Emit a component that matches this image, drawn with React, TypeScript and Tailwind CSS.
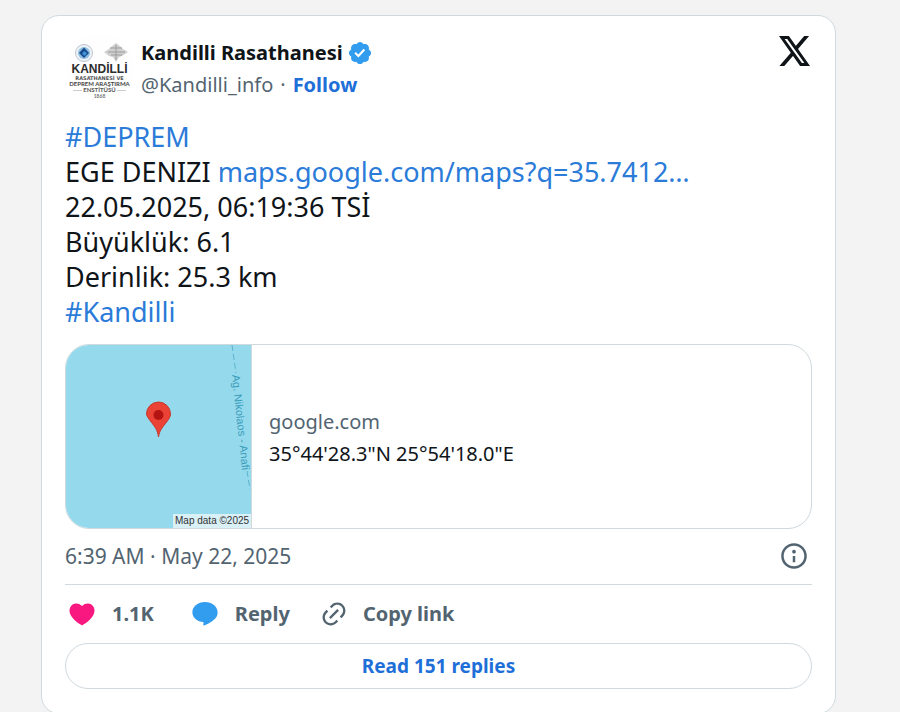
import type { ReactNode } from "react";

const icons = {
  verified:
    "M22.25 12c0-1.43-.88-2.67-2.19-3.34.46-1.39.2-2.9-.81-3.91s-2.52-1.27-3.91-.81c-.66-1.31-1.91-2.19-3.34-2.19s-2.67.88-3.33 2.19c-1.4-.46-2.91-.2-3.92.81s-1.26 2.52-.8 3.91c-1.31.67-2.2 1.91-2.2 3.34s.89 2.67 2.2 3.34c-.46 1.39-.21 2.9.8 3.91s2.52 1.26 3.91.81c.67 1.31 1.91 2.19 3.34 2.19s2.68-.88 3.34-2.19c1.39.45 2.9.2 3.91-.81s1.27-2.52.81-3.91c1.31-.67 2.19-1.91 2.19-3.34zm-11.71 4.2L6.8 12.46l1.41-1.42 2.26 2.26 4.8-5.23 1.47 1.36-6.2 6.77z",
  info: "M13.5 8.5c0 .83-.67 1.5-1.5 1.5s-1.5-.67-1.5-1.5S11.17 7 12 7s1.5.67 1.5 1.5zM13 17v-5h-2v5h2zm-1 5.25c5.66 0 10.25-4.59 10.25-10.25S17.66 1.75 12 1.75 1.75 6.34 1.75 12 6.34 22.25 12 22.25zM20.25 12c0 4.56-3.69 8.25-8.25 8.25S3.75 16.56 3.75 12 7.44 3.75 12 3.75s8.25 3.69 8.25 8.25z",
  heart:
    "M20.884 13.19c-1.351 2.48-4.001 5.12-8.379 7.67l-.503.3-.504-.3c-4.379-2.55-7.029-5.19-8.382-7.67-1.36-2.5-1.41-4.86-.514-6.67.887-1.79 2.647-2.91 4.601-3.01 1.651-.09 3.368.56 4.798 2.01 1.429-1.45 3.146-2.1 4.796-2.01 1.954.1 3.714 1.22 4.601 3.01.896 1.81.846 4.17-.514 6.67z",
  reply:
    "M12 2.4c5.7 0 10.1 3.6 10.1 8.4 0 3.2-1.900 5.300-4.700 7.100-1.900 1.200-4 2.300-6 3.300-.5.200-.9-.1-.8-.6l.3-2.100C5.700 18.200 1.900 15 1.900 10.600 1.900 5.900 6.300 2.400 12 2.400z",
  link: "M18.36 5.64c-1.95-1.96-5.11-1.96-7.07 0L9.88 7.05 8.46 5.64l1.42-1.42c2.73-2.73 7.16-2.73 9.9 0 2.73 2.74 2.73 7.17 0 9.9l-1.42 1.42-1.41-1.42 1.41-1.41c1.96-1.96 1.96-5.12 0-7.07zm-2.12 3.53l-7.07 7.07-1.41-1.41 7.07-7.07 1.41 1.41zm-12.02.71l1.42-1.42 1.41 1.42-1.41 1.41c-1.96 1.96-1.96 5.12 0 7.07 1.95 1.96 5.11 1.96 7.07 0l1.41-1.41 1.42 1.41-1.42 1.42c-2.73 2.73-7.16 2.73-9.9 0-2.73-2.74-2.73-7.17 0-9.9z",
};

function Icon({ name, className }: { name: keyof typeof icons; className: string }) {
  return (
    <svg viewBox="0 0 24 24" fill="currentColor" aria-hidden="true" className={className}>
      <path d={icons[name]} />
    </svg>
  );
}

function XLogo() {
  return (
    <svg viewBox="0 0 31 30" fill="currentColor" aria-hidden="true" className="h-[30px] w-[31px]">
      <path fillRule="evenodd" d="M0 0h9.900L31 30h-9.900zM5.600 2.900L22.900 27.100h2.500L8.200 2.900z" />
      <path d="M25.200 0h4.900L18.600 13.600l-2.300-3.200zM.4 30h4.900l9.900-11.400-2.300-3.200z" />
    </svg>
  );
}

function TextLink({ children }: { children: ReactNode }) {
  return (
    <a href="#" className="text-[#2b7bd9] hover:underline">
      {children}
    </a>
  );
}

function Avatar() {
  return (
    <svg viewBox="0 0 70 70" className="size-[70px] shrink-0" role="img" aria-label="Kandilli Rasathanesi">
      <circle cx="35" cy="35" r="34" fill="#fefefe" />
      <circle cx="19" cy="20" r="8.5" fill="#eef2f6" stroke="#bcc6d2" strokeWidth="1" />
      <circle cx="19" cy="20" r="6" fill="#8fbfe2" />
      <path d="M19 14.500l5 5.500-5 5-5-5z" fill="#174b8c" />
      <path d="M19 18l3 2-2 3-3-2z" fill="#3f93d6" />
      <path d="M39 19l5-3 2-2 5-4 5 4 2 2 5 3-6 4-3 1-3 5-3-5-4-1z" fill="#d0d0d0" />
      <path d="M45 15h12M43 19h17M46 22h11M51 12v15" stroke="#9c9c9c" strokeWidth="1" fill="none" />
      <g textAnchor="middle" fontFamily="Lato, sans-serif" fontWeight="700">
        <text x="34.500" y="40" fontSize="12" fontFamily="Liberation Sans, sans-serif" fill="#2d2d2d">
          KANDİLLİ
        </text>
        <text x="34.500" y="47" fontSize="5" fontFamily="DejaVu Sans, sans-serif" fill="#555">
          RASATHANESİ VE
        </text>
        <text x="34.500" y="53" fontSize="6" fill="#444">DEPREM ARAŞTIRMA</text>
        <text x="34.500" y="59" fontSize="6" fill="#555">ENSTİTÜSÜ</text>
        <text x="34.500" y="65" fontSize="5" fill="#777">1868</text>
      </g>
      <path d="M8 57.500h9M52 57.500h9" stroke="#ccc" strokeWidth="1" />
    </svg>
  );
}

function MapPreview() {
  return (
    <svg viewBox="0 0 185 183" className="w-[185px] shrink-0 bg-[#95d9ec]" role="img" aria-label="Map">
      <path d="M166 0l4 28M181 126l3 18" stroke="#5fb3cc" strokeWidth="1" strokeDasharray="6 3" fill="none" />
      <text
        transform="translate(166 30) rotate(84)"
        fontFamily="Liberation Sans, sans-serif"
        fontSize="11"
        fill="#3a9dba"
      >
        Ag. Nikolaos - Anafi
      </text>
      <path
        d="M92.500 92c-1-7-3.500-10-7-14.500-3-4-5-6.500-5-8.500a12 12 0 1 1 24 0c0 3-2 5.500-5 9.500-3.500 4.500-6 7-7 13.500z"
        fill="#ea4335"
        stroke="#c5392d"
        strokeWidth="1"
      />
      <circle cx="92.500" cy="70" r="5" fill="#b31412" />
      <path d="M107 169h78v14h-78z" fill="#d9f0f7" />
      <text x="109" y="179" fontFamily="Liberation Sans, sans-serif" fontSize="10" fill="#333">
        Map data ©2025
      </text>
    </svg>
  );
}

export default function App() {
  return (
    <div className="min-h-screen bg-[#f3f3f3] pt-[15px] pr-16 pl-[41px] font-['Noto_Sans',sans-serif] text-[#0f1419]">
      <article className="rounded-[18px] border border-[#cfd9de] bg-white px-[23px] pt-[17px] pb-6">
        <header className="flex items-start">
          <Avatar />
          <div className="ml-[6px] grow pt-1">
            <div className="flex items-center gap-1">
              <a href="#" className="text-xl leading-8 font-bold">
                Kandilli Rasathanesi
              </a>
              <Icon name="verified" className="size-[26px] text-[#329cef]" />
            </div>
            <div className="flex gap-[7px] text-xl leading-8 text-[#536471]">
              <a href="#">@Kandilli_info</a>
              <span>·</span>
              <button type="button" className="font-bold text-[#1f6fd8]">
                Follow
              </button>
            </div>
          </div>
          <a href="#" aria-label="View on X" className="pt-[3px] pr-[2px]">
            <XLogo />
          </a>
        </header>

        <p className="mt-4 text-[27px] leading-[35px]">
          <TextLink>#DEPREM</TextLink>
          <br />
          EGE DENIZI <TextLink>maps.google.com/maps?q=35.7412…</TextLink>
          <br />
          22.05.2025, 06:19:36 TSİ
          <br />
          Büyüklük: 6.1
          <br />
          Derinlik: 25.3 km
          <br />
          <TextLink>#Kandilli</TextLink>
        </p>

        <a href="#" className="mt-[15px] flex overflow-hidden rounded-[24px] border border-[#cfd9de]">
          <MapPreview />
          <div className="flex grow flex-col justify-center border-l border-[#cfd9de] px-[17px] pt-[2px] text-xl leading-8">
            <span className="text-[#536471]">google.com</span>
            <span>35°44'28.3"N 25°54'18.0"E</span>
          </div>
        </a>

        <div className="flex items-center justify-between border-b border-[#cfd9de] pt-[11px] pb-3 text-[21px] leading-8 text-[#536471]">
          <a href="#">6:39 AM · May 22, 2025</a>
          <a href="#" aria-label="Ads info and privacy" className="pr-[3px]">
            <Icon name="info" className="size-[30px]" />
          </a>
        </div>

        <div className="flex items-center py-[13px] pl-[2px] text-xl leading-8 font-bold text-[#536471]">
          <button type="button" className="flex items-center gap-[15px]">
            <Icon name="heart" className="size-[30px] text-[#f91880]" />
            1.1K
          </button>
          <button type="button" className="ml-9 flex items-center gap-[15px]">
            <Icon name="reply" className="size-[30px] text-[#329cef]" />
            Reply
          </button>
          <button type="button" className="ml-[30px] flex items-center gap-[15px]">
            <Icon name="link" className="size-[28px]" />
            Copy link
          </button>
        </div>

        <button
          type="button"
          className="h-[46px] w-full rounded-full border border-[#cfd9de] text-[19px] font-bold text-[#1f6fd8]"
        >
          Read 151 replies
        </button>
      </article>
    </div>
  );
}
